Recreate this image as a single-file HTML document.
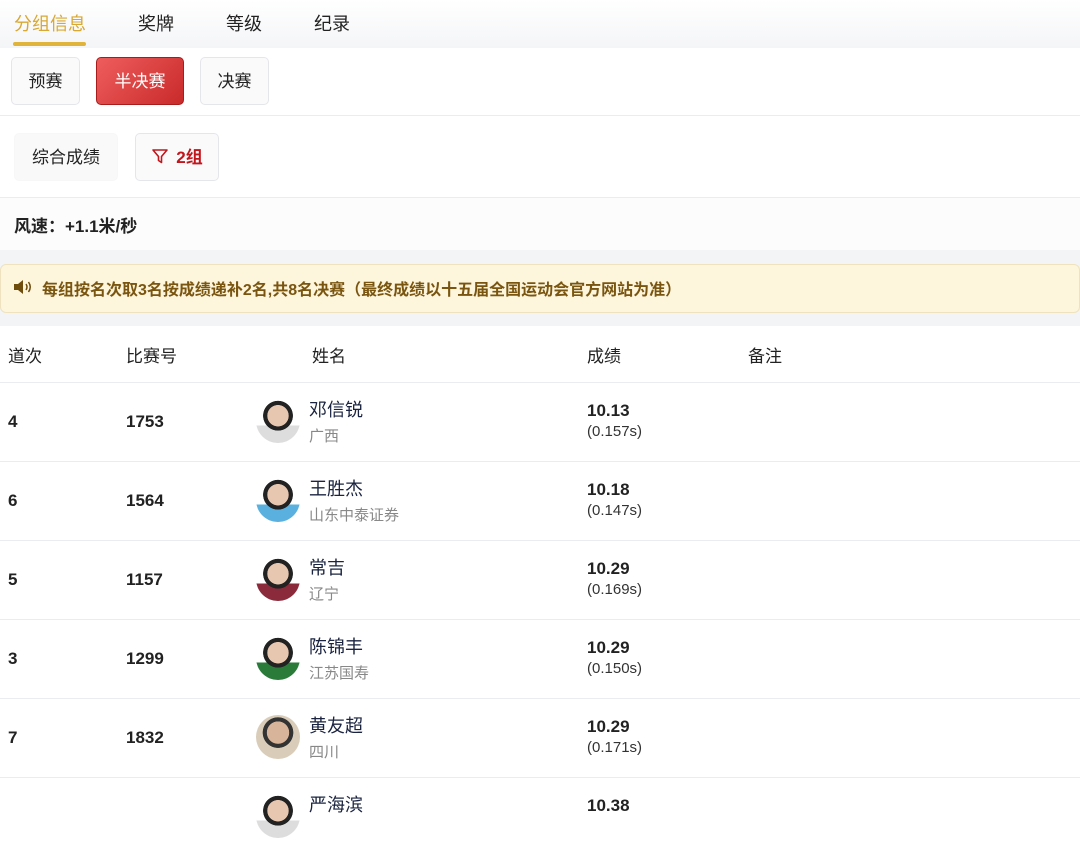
<!DOCTYPE html>
<html><head><meta charset="utf-8"><style>
*{margin:0;padding:0;box-sizing:border-box}
body{width:1080px;height:810px;overflow:hidden;background:#fff;font-family:"Liberation Sans","Noto Sans CJK SC",sans-serif;color:#222;position:relative}
.tabs{height:48px;background:linear-gradient(#fff,#f4f5f7);position:relative}
.tab{position:absolute;top:10px;font-size:18px;color:#222}
.tab.on{color:#d9a832}
.ul{position:absolute;left:13px;top:42px;width:73px;height:4px;background:#e0b43a;border-radius:2px}
.btn{position:absolute;border:1px solid #e5e6ea;border-radius:5px;background:#fafafb;font-size:17px;display:flex;align-items:center;justify-content:center;padding-bottom:3px}
.red{background:linear-gradient(135deg,#ef5d5d,#c92a2a);border-color:#a81c1c;color:#fff}
.hr{position:absolute;left:0;width:1080px;height:1px;background:#ebecef}
.notice{position:absolute;left:0;top:264px;width:1080px;height:49px;background:#fdf5dc;border:1px solid #efe3bf;border-radius:6px;color:#7a5510;font-size:16px;font-weight:bold;padding:11px 0 0 41px}
.row{position:absolute;left:0;width:1080px;height:79px;border-top:1px solid #ebecef}
.c{position:absolute;font-size:17px}
.av{position:absolute;left:256px;top:16px;width:44px;height:44px;border-radius:50%;background:radial-gradient(circle at 50% 38%,#e8c7b0 0 30%,#222 31% 42%,transparent 43%),linear-gradient(#fff 60%,#ddd 60%)}
.nm{position:absolute;left:309px;top:13px;font-size:18px;color:#1a2340}
.tm{position:absolute;left:309px;top:42px;font-size:15px;color:#888}
.sc{position:absolute;left:587px;top:18px;font-size:17px;font-weight:bold}
.rt{position:absolute;left:587px;top:40px;font-size:15px;color:#333}
</style></head><body>
<div class="tabs">
<span class="tab on" style="left:14px">分组信息</span>
<span class="tab" style="left:138px">奖牌</span>
<span class="tab" style="left:226px">等级</span>
<span class="tab" style="left:314px">纪录</span>
<div class="ul"></div>
</div>
<div class="btn" style="left:11px;top:57px;width:69px;height:48px">预赛</div>
<div class="btn red" style="left:96px;top:57px;width:88px;height:48px">半决赛</div>
<div class="btn" style="left:200px;top:57px;width:69px;height:48px">决赛</div>
<div class="hr" style="top:115px"></div>
<div class="btn" style="left:14px;top:133px;width:104px;height:48px;border-color:#f7f7f8;background:#f9f9fa">综合成绩</div>
<div class="btn" style="left:135px;top:133px;width:84px;height:48px;color:#c0161c;font-weight:bold">
<svg width="18" height="18" viewBox="0 0 18 18" style="margin-right:7px"><path d="M2 3h14l-5.5 6.5v6l-3-2v-4z" fill="none" stroke="#c0161c" stroke-width="1.6" stroke-linejoin="round"/></svg>2组</div>
<div class="hr" style="top:197px"></div>
<div style="position:absolute;left:0;top:198px;width:1080px;height:52px;background:#fcfcfd"></div>
<div style="position:absolute;left:14px;top:212px;font-size:17px;font-weight:bold">风速：+1.1米/秒</div>
<div style="position:absolute;left:0;top:250px;width:1080px;height:76px;background:#f3f4f6"></div>
<div class="notice"><svg width="20" height="18" viewBox="0 0 20 18" style="position:absolute;left:12px;top:13px"><path d="M1 6h4l5-4v14l-5-4H1z" fill="#6e4c0c"/><path d="M13 6q2 3 0 6M15.5 4q3.5 5 0 10" fill="none" stroke="#6e4c0c" stroke-width="1.5"/></svg>每组按名次取3名按成绩递补2名,共8名决赛（最终成绩以十五届全国运动会官方网站为准）</div>
<div class="c" style="left:8px;top:342px">道次</div>
<div class="c" style="left:126px;top:342px">比赛号</div>
<div class="c" style="left:312px;top:342px">姓名</div>
<div class="c" style="left:587px;top:342px">成绩</div>
<div class="c" style="left:748px;top:342px">备注</div>

<div class="row" style="top:382px"><div class="c" style="left:8px;top:29px;font-weight:bold">4</div><div class="c" style="left:126px;top:29px;font-weight:bold">1753</div><div class="av"></div><div class="nm">邓信锐</div><div class="tm">广西</div><div class="sc">10.13</div><div class="rt">(0.157s)</div></div>
<div class="row" style="top:461px"><div class="c" style="left:8px;top:29px;font-weight:bold">6</div><div class="c" style="left:126px;top:29px;font-weight:bold">1564</div><div class="av" style="background:radial-gradient(circle at 50% 38%,#e8c7b0 0 30%,#222 31% 42%,transparent 43%),linear-gradient(#fff 60%,#5ab0de 60%)"></div><div class="nm">王胜杰</div><div class="tm">山东中泰证券</div><div class="sc">10.18</div><div class="rt">(0.147s)</div></div>
<div class="row" style="top:540px"><div class="c" style="left:8px;top:29px;font-weight:bold">5</div><div class="c" style="left:126px;top:29px;font-weight:bold">1157</div><div class="av" style="background:radial-gradient(circle at 50% 38%,#e8c7b0 0 30%,#222 31% 42%,transparent 43%),linear-gradient(#fff 60%,#8a2a3a 60%)"></div><div class="nm">常吉</div><div class="tm">辽宁</div><div class="sc">10.29</div><div class="rt">(0.169s)</div></div>
<div class="row" style="top:619px"><div class="c" style="left:8px;top:29px;font-weight:bold">3</div><div class="c" style="left:126px;top:29px;font-weight:bold">1299</div><div class="av" style="background:radial-gradient(circle at 50% 38%,#e8c7b0 0 30%,#222 31% 42%,transparent 43%),linear-gradient(#fff 60%,#2a7a3a 60%)"></div><div class="nm">陈锦丰</div><div class="tm">江苏国寿</div><div class="sc">10.29</div><div class="rt">(0.150s)</div></div>
<div class="row" style="top:698px"><div class="c" style="left:8px;top:29px;font-weight:bold">7</div><div class="c" style="left:126px;top:29px;font-weight:bold">1832</div><div class="av" style="background:radial-gradient(circle at 50% 40%,#d8b49a 0 32%,#333 33% 44%,#d9ccb8 45%)"></div><div class="nm">黄友超</div><div class="tm">四川</div><div class="sc">10.29</div><div class="rt">(0.171s)</div></div>
<div class="row" style="top:777px"><div class="av"></div><div class="nm">严海滨</div><div class="sc">10.38</div></div>
</body></html>
